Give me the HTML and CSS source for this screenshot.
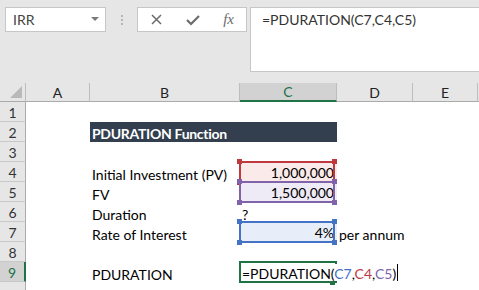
FILE: index.html
```html
<!DOCTYPE html>
<html lang="en">
<head>
<meta charset="UTF-8">
<title>PDURATION Function</title>
<link rel="stylesheet" href="styles.css">
</head>
<body>
    <!-- Formula bar -->
    <div class="bar">
        <div class="namebox">IRR<i class="drop"></i></div>
        <div class="grip"><i></i><i></i><i></i></div>
        <div class="fnbox">
            <svg width="11" height="11" viewBox="0 0 11 11"><path d="M1 1L10 10M10 1L1 10" stroke="#6b6b6b" stroke-width="1.5" fill="none"/></svg>
            <svg width="14" height="12" viewBox="0 0 14 12"><path d="M1 6L5 10L13 2" stroke="#6b6b6b" stroke-width="2.2" fill="none"/></svg>
            <span class="fx">fx</span>
        </div>
        <div class="formula">=PDURATION(C7,C4,C5)</div>
    </div>

    <!-- Sheet -->
    <div class="sheet">
        <div class="hd corner"><i class="tri"></i></div>
        <div class="hd">A</div>
        <div class="hd">B</div>
        <div class="hd sel">C</div>
        <div class="hd">D</div>
        <div class="hd">E</div>
        <div class="hd last"></div>

        <div class="rn">1</div><div class="c"></div><div class="c"></div><div class="c"></div><div class="c"></div><div class="c"></div><div class="c"></div>

        <div class="rn">2</div><div class="c"></div><div class="c title">PDURATION Function</div><div class="c"></div><div class="c"></div><div class="c"></div>

        <div class="rn">3</div><div class="c"></div><div class="c"></div><div class="c"></div><div class="c"></div><div class="c"></div><div class="c"></div>

        <div class="rn">4</div><div class="c"></div><div class="c">Initial Investment (PV)</div><div class="c num ref red">1,000,000</div><div class="c"></div><div class="c"></div><div class="c"></div>

        <div class="rn">5</div><div class="c"></div><div class="c">FV</div><div class="c num ref purple">1,500,000</div><div class="c"></div><div class="c"></div><div class="c"></div>

        <div class="rn">6</div><div class="c"></div><div class="c">Duration</div><div class="c">?</div><div class="c"></div><div class="c"></div><div class="c"></div>

        <div class="rn">7</div><div class="c"></div><div class="c">Rate of Interest</div><div class="c num ref blue">4%</div><div class="c">per annum</div><div class="c"></div><div class="c"></div>

        <div class="rn">8</div><div class="c"></div><div class="c"></div><div class="c"></div><div class="c"></div><div class="c"></div><div class="c"></div>

        <div class="rn sel">9</div><div class="c"></div><div class="c">PDURATION</div>
        <div class="c active">
            <span class="edit">=PDURATION(<b class="t-blue">C7</b>,<b class="t-red">C4</b>,<b class="t-purple">C5</b>)</span>
        </div>
        <div class="c"></div><div class="c"></div><div class="c"></div>

        <div class="rn"></div><div class="c"></div><div class="c"></div><div class="c"></div><div class="c"></div><div class="c"></div><div class="c"></div>
    </div>
</body>
</html>
```
FILE: styles.css
```css
body {
    margin: 0;
    width: 479px;
    height: 290px;
    overflow: hidden;
    background: #e6e6e6;
    font-family: Lato, "Liberation Sans", sans-serif;
    font-size: 14px;
    color: #000;
}

/* formula bar */
.bar {
    display: flex;
    align-items: flex-start;
    height: 83px;
    padding: 7px 0 0 5px;
    box-sizing: border-box;
}

.namebox {
    position: relative;
    width: 101px;
    height: 25px;
    box-sizing: border-box;
    border: 1px solid #c6c6c6;
    background: white;
    color: #444;
    padding-left: 7px;
    line-height: 23px;
}

.drop {
    position: absolute;
    right: 6px;
    top: 9px;
    border-left: 4px solid transparent;
    border-right: 4px solid transparent;
    border-top: 4px solid #7a7a7a;
}

.grip {
    width: 31px;
    display: flex;
    flex-direction: column;
    align-items: center;
    gap: 2px;
    padding-top: 8px;
}

.grip i {
    width: 2px;
    height: 2px;
    background: #b4b4b4;
}

.fnbox {
    width: 110px;
    height: 25px;
    box-sizing: border-box;
    border: 1px solid #c6c6c6;
    background: white;
    display: flex;
    align-items: center;
    justify-content: space-between;
    padding: 0 12px 0 13px;
}

.fx {
    font-family: "Liberation Serif", serif;
    font-style: italic;
    font-size: 15px;
    color: #6b6b6b;
}

.formula {
    flex: 1;
    margin-left: 3px;
    height: 65px;
    box-sizing: border-box;
    border: 1px solid #c6c6c6;
    border-right: none;
    background: white;
    color: #333;
    padding: 3px 0 0 11px;
}

/* sheet */
.sheet {
    display: grid;
    grid-template-columns: 26px 64px 150px 97px 76px 65px 1fr;
    grid-template-rows: 19px repeat(10, 20px);
    background: white;
}

.hd {
    background: #e6e6e6;
    border-right: 1px solid #bdbdbd;
    border-bottom: 1px solid #ababab;
    text-align: center;
    line-height: 19px;
    color: #222;
    position: relative;
}

.hd.last {
    border-right: none;
}

.hd.sel {
    background: #d2d2d2;
    color: #217346;
    border-bottom: 2px solid #217346;
    line-height: 18px;
}

.tri {
    position: absolute;
    right: 3px;
    bottom: 3px;
    border-left: 12px solid transparent;
    border-bottom: 12px solid #b9b9b9;
}

.rn {
    background: #e6e6e6;
    border-right: 1px solid #ababab;
    border-bottom: 1px solid #c8c8c8;
    text-align: center;
    line-height: 22px;
    color: #333;
    box-sizing: border-box;
}

.rn.sel {
    background: #d2d2d2;
    color: #217346;
    border-right: 2px solid #217346;
}

.c {
    position: relative;
    padding: 0 2px;
    line-height: 25px;
    white-space: nowrap;
}

.title {
    grid-column: span 2;
    background: #333f4f;
    color: white;
    font-weight: bold;
    letter-spacing: -0.3px;
    line-height: 23px;
}

.num {
    text-align: right;
    padding-right: 3px;
    line-height: 22px;
}

/* reference boxes */
.ref::before {
    content: "";
    position: absolute;
    top: -1px;
    left: -1px;
    right: 2px;
    bottom: -1px;
    border: 2px solid var(--rc);
}

.ref::after {
    content: "";
    position: absolute;
    top: -3px;
    left: -3px;
    right: 0;
    bottom: -3px;
    background:
        linear-gradient(var(--rc), var(--rc)) left top / 5px 5px no-repeat,
        linear-gradient(var(--rc), var(--rc)) right top / 5px 5px no-repeat,
        linear-gradient(var(--rc), var(--rc)) left bottom / 5px 5px no-repeat,
        linear-gradient(var(--rc), var(--rc)) right bottom / 5px 5px no-repeat;
}

.ref.red { --rc: #c0393f; background: #fbeaea; }
.ref.purple { --rc: #8063a8; background: #efebf6; }
.ref.blue { --rc: #4472c4; background: #e8eef9; }

.ref.purple { z-index: 1; }

.active {
    border: 2px solid #217346;
    margin: -1px 0 -1px -1px;
    padding: 0;
}

.active::after {
    content: "";
    position: absolute;
    right: 0;
    bottom: -4px;
    width: 5px;
    height: 5px;
    background: #217346;
}

.edit {
    position: absolute;
    left: 1px;
    top: 1px;
    height: 17px;
    line-height: 20px;
    padding-right: 1px;
    background: white;
    border-right: 1px solid #000;
    z-index: 2;
}

.edit b {
    font-weight: normal;
}

.t-blue { color: #4472c4; }
.t-red { color: #c0393f; }
.t-purple { color: #8063a8; }
```
